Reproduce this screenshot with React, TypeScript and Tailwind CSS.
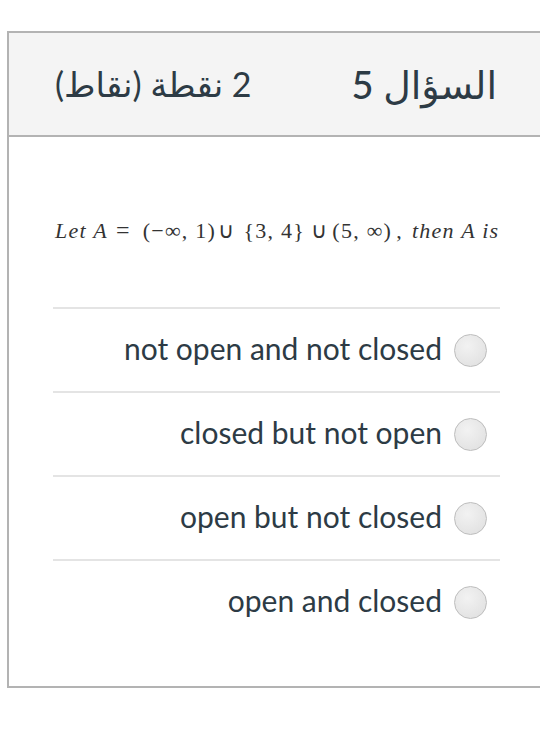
const OPTIONS = [
  "not open and not closed",
  "closed but not open",
  "open but not closed",
  "open and closed",
];

export default function App() {
  return (
    <div className="w-[540px] h-[731px] overflow-hidden bg-white">
      <div className="mt-[31px] ml-[7px] w-[545px] border-2 border-[#b3b3b3] bg-white">
        {/* Header */}
        <div
          dir="rtl"
          className="h-[104px] bg-[#f4f4f4] border-b-2 border-[#b3b3b3] flex items-center justify-between pr-[53px] pl-[46px] text-[#2d3b45]"
          style={{ fontFamily: "Lato, 'DejaVu Sans', sans-serif" }}
        >
          <span className="text-[38px] font-medium leading-none">السؤال 5</span>
          <span className="text-[34px] font-normal leading-none">2 نقطة (نقاط)</span>
        </div>

        {/* Body */}
        <div className="pl-[44px] pr-[50px] pt-[78px] pb-[43px]">
          <p
            className="h-[30px] flex items-center text-[22px] text-[#333] m-0 whitespace-nowrap tracking-[1.25px]"
            style={{ fontFamily: "'Liberation Serif', serif" }}
          >
            <span className="italic ml-[2px]">Let A</span>
            <span className="ml-[8px] text-[24px]">=</span>
            <span className="ml-[12px]">(−∞, 1)</span>
            <span className="ml-[2px]">∪</span>
            <span className="ml-[8px]">{"{"}3, 4{"}"}</span>
            <span className="ml-[6px]">∪</span>
            <span className="ml-[4px]">(5, ∞)</span>
            <span className="ml-[4px]">,</span>
            <span className="italic ml-[9px]">then A is</span>
          </p>

          <div className="mt-[62px] flex flex-col">
            {OPTIONS.map((opt) => (
              <label
                key={opt}
                className="h-[84px] flex items-center justify-end gap-[12px] pr-[13px] border-t-2 border-[#e4e4e4]"
              >
                <span
                  className="text-[30px] text-[#2d3b45] leading-none -mt-[4px]"
                  style={{ fontFamily: "Lato, sans-serif" }}
                >
                  {opt}
                </span>
                <span className="size-[33px] rounded-full border border-[#bdbdbd] bg-[radial-gradient(circle_at_40%_35%,#f2f2f2,#dedede)]" />
              </label>
            ))}
          </div>
        </div>
      </div>
    </div>
  );
}
